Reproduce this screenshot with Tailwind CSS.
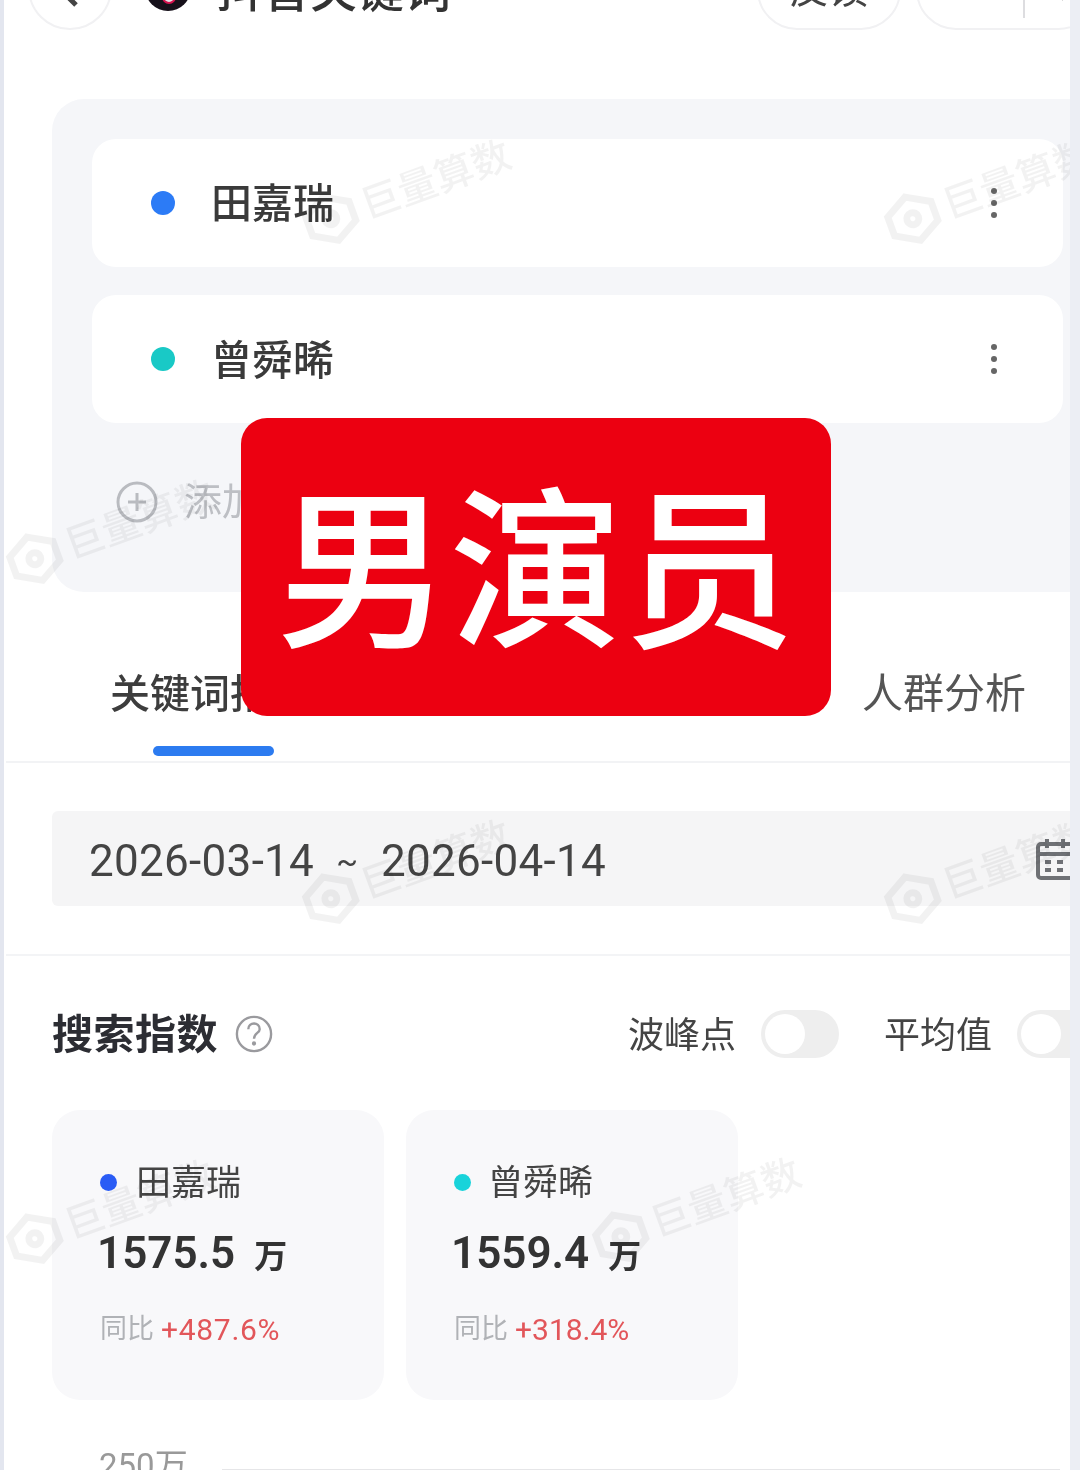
<!DOCTYPE html>
<html lang="zh">
<head>
<meta charset="utf-8">
<script src="https://cdn.jsdelivr.net/npm/@tailwindcss/browser@4"></script>
</head>
<body class="m-0 bg-white">
<div class="relative flex w-[1080px] h-[1470px] overflow-hidden bg-[#eceef4] text-[#333] font-['Roboto','Noto_Sans_CJK_SC',sans-serif]">
  <div class="w-[4px] shrink-0 bg-[#e3e6ef]"></div>
  <main class="relative w-[1066px] shrink-0 h-[1470px] overflow-hidden bg-white blur-[0.6px]">
    <!-- header -->
    <header class="flex items-center h-[84px] -mt-[54px] pl-[24px]">
      <div class="flex items-center justify-center w-[84px] h-[84px] rounded-full border-2 border-[#f1f1f3]">
        <svg class="mt-[6px]" width="28" height="36" viewBox="0 0 28 36" fill="none" stroke="#444" stroke-width="5"><path d="M20 4 6 18l14 14"/></svg>
      </div>
      <svg class="ml-[33px]" width="46" height="46" viewBox="0 0 46 46"><circle cx="23" cy="23" r="23" fill="#16101a"/><circle cx="24" cy="32" r="6" fill="#e8e3e8" stroke="#d3124f" stroke-width="2"/></svg>
      <span class="ml-[25px] pt-[4px] text-[47px] leading-none text-[#333] font-medium whitespace-nowrap">抖音关键词</span>
      <div class="ml-auto flex items-center justify-center w-[144px] h-[84px] pt-[4px] rounded-[40px] border-2 border-[#f1f1f3] text-[40px] text-[#444] shrink-0">反馈</div>
      <div class="ml-[15px] flex items-center w-[182px] -mr-[28px] h-[84px] rounded-[40px] border-2 border-[#f1f1f3] shrink-0">
        <span class="ml-[105px] w-[2px] h-[46px] mt-[14px] bg-[#dddde0]"></span>
        <svg class="ml-[34px] mt-[-6px]" width="16" height="32" viewBox="0 0 16 32" fill="none" stroke="#444" stroke-width="4"><path d="M2 30 14 18"/></svg>
      </div>
    </header>

    <!-- compare card -->
    <section class="mt-[69px] ml-[48px] w-[1100px] h-[493px] rounded-[32px] bg-[#f5f6f9] pt-[40px] pl-[40px]">
      <div class="flex flex-col gap-[28px] w-[971px]">
        <div class="flex items-center h-[128px] rounded-[24px] bg-white pl-[59px] pr-[66px]">
          <span class="w-[24px] h-[24px] rounded-full bg-[#2c7bf6]"></span>
          <span class="ml-[36px] pt-[4px] text-[41px] font-medium text-[#3a3a3a]">田嘉瑞</span>
          <span class="ml-auto flex flex-col gap-[6px]"><i class="block w-[6px] h-[6px] rounded-full bg-[#666]"></i><i class="block w-[6px] h-[6px] rounded-full bg-[#666]"></i><i class="block w-[6px] h-[6px] rounded-full bg-[#666]"></i></span>
        </div>
        <div class="flex items-center h-[128px] rounded-[24px] bg-white pl-[59px] pr-[66px]">
          <span class="w-[24px] h-[24px] rounded-full bg-[#19c9c6]"></span>
          <span class="ml-[36px] pt-[5px] text-[41px] font-medium text-[#3a3a3a]">曾舜晞</span>
          <span class="ml-auto flex flex-col gap-[6px]"><i class="block w-[6px] h-[6px] rounded-full bg-[#666]"></i><i class="block w-[6px] h-[6px] rounded-full bg-[#666]"></i><i class="block w-[6px] h-[6px] rounded-full bg-[#666]"></i></span>
        </div>
      </div>
      <div class="flex items-center h-[42px] mt-[58px] ml-[24px]">
        <svg width="42" height="42" viewBox="0 0 42 42" fill="none" stroke="#b9bbc0" stroke-width="3"><circle cx="21" cy="21" r="19"/><path d="M21 12v18M12 21h18"/></svg>
        <span class="ml-[26px] text-[38px] text-[#bdbfc4]">添加对比词</span>
      </div>
    </section>

    <!-- tabs -->
    <nav class="relative flex items-center h-[171px] pt-[36px] ml-[2px] border-b-2 border-[#f2f3f5] box-border">
      <span class="ml-[104px] text-[40px] font-medium text-[#3d3d3d]">关键词指数</span>
      <span class="ml-auto mr-[44px] text-[41px] text-[#555]">人群分析</span>
      <span class="absolute left-[147px] bottom-[5px] w-[121px] h-[10px] rounded-full bg-[#2c7bf0]"></span>
    </nav>

    <!-- date -->
    <div class="flex items-center mt-[48px] ml-[48px] w-[1100px] h-[95px] rounded-[6px] bg-[#f5f5f6] pl-[37px]">
      <span class="pt-[4px] text-[44px] tracking-[0.3px] text-[#444] whitespace-nowrap">2026-03-14</span>
      <span class="ml-[22px] pt-[4px] text-[32px] text-[#444]">~</span>
      <span class="ml-[23px] pt-[4px] text-[44px] tracking-[0.3px] text-[#444] whitespace-nowrap">2026-04-14</span>
      <svg class="ml-[430px] shrink-0" width="36" height="42" viewBox="0 0 36 42" fill="none" stroke="#6f7175" stroke-width="4"><rect x="2" y="6" width="38" height="34" rx="3"/><path d="M2 16h38M11 1v9M27 1v9M9 24h6M21 24h6M9 32h6M21 32h6"/></svg>
    </div>
    <div class="mt-[48px] ml-[2px] h-[2px] bg-[#f3f4f6]"></div>

    <!-- search index heading -->
    <div class="flex items-center h-[48px] mt-[54px] ml-[48px]">
      <h2 class="pt-[4px] text-[41px] tracking-[0.5px] font-bold text-[#2c2d33] whitespace-nowrap">搜索指数</h2>
      <svg class="ml-[17px] shrink-0" width="38" height="38" viewBox="0 0 40 40" fill="none" stroke="#9a9a9e" stroke-width="2.5"><circle cx="20" cy="20" r="18"/><path d="M14 15c0-4 3-6 6-6s6 2 6 6c0 4-6 4-6 10"/><circle cx="20" cy="30" r="1" fill="#9a9a9e"/></svg>
      <span class="ml-[355px] pt-[4px] text-[36px] text-[#444] whitespace-nowrap">波峰点</span>
      <span class="ml-[25px] flex items-center w-[78px] h-[48px] rounded-full bg-[#eeeeee] pl-[4px] shrink-0"><i class="block w-[40px] h-[40px] rounded-full bg-white"></i></span>
      <span class="ml-[45px] pt-[4px] text-[36px] text-[#444] whitespace-nowrap">平均值</span>
      <span class="ml-[25px] flex items-center w-[78px] h-[48px] rounded-full bg-[#eeeeee] pl-[4px] shrink-0"><i class="block w-[40px] h-[40px] rounded-full bg-white"></i></span>
    </div>

    <!-- metric cards -->
    <div class="flex gap-[22px] mt-[52px] ml-[48px]">
      <article class="w-[332px] h-[290px] rounded-[28px] bg-[#f8f8fa] pt-[48px] pl-[48px]">
        <div class="flex items-center h-[48px]"><span class="w-[17px] h-[17px] rounded-full bg-[#2a5cf5]"></span><span class="ml-[19px] pt-[4px] text-[35px] text-[#444]">田嘉瑞</span></div>
        <div class="flex items-baseline h-[60px] leading-[60px] mt-[17px] -ml-[3px] text-[#333]"><span class="text-[44px] font-semibold">1575.5</span><span class="ml-[19px] text-[33px] font-bold">万</span></div>
        <div class="flex items-center h-[36px] mt-[28px] text-[30px]"><span class="text-[#b0b2b6] text-[27px]">同比</span><span class="ml-[7px] tracking-[0.7px] text-[#e2565a]">+487.6%</span></div>
      </article>
      <article class="w-[332px] h-[290px] rounded-[28px] bg-[#f8f8fa] pt-[48px] pl-[48px]">
        <div class="flex items-center h-[48px]"><span class="w-[17px] h-[17px] rounded-full bg-[#19d3da]"></span><span class="ml-[17px] pt-[4px] text-[35px] text-[#444]">曾舜晞</span></div>
        <div class="flex items-baseline h-[60px] leading-[60px] mt-[17px] -ml-[3px] text-[#333]"><span class="text-[44px] font-semibold">1559.4</span><span class="ml-[19px] text-[33px] font-bold">万</span></div>
        <div class="flex items-center h-[36px] mt-[28px] text-[30px]"><span class="text-[#b0b2b6] text-[27px]">同比</span><span class="ml-[7px] text-[#e2565a]">+318.4%</span></div>
      </article>
    </div>

    <!-- chart head -->
    <div class="flex items-start mt-[50px] ml-[95px] h-[30px]">
      <span class="text-[33px] leading-[32px] text-[#999] whitespace-nowrap">250万</span>
      <span class="ml-[34px] mt-[19px] w-[838px] h-[2px] bg-[#e6e6e8]"></span>
    </div>

    <!-- watermarks -->
    <div class="absolute left-[294px] top-[162px] flex items-center gap-[6px] -rotate-[20deg] text-[39px] font-medium text-black/[0.05] whitespace-nowrap"><svg width="56" height="56" viewBox="0 0 56 56" fill="none" stroke="#000" stroke-opacity=".05" stroke-width="7"><path d="M28 5 51 18v20L28 51 5 38V18z"/><circle cx="28" cy="28" r="6"/></svg>巨量算数</div>
    <div class="absolute left-[876px] top-[162px] flex items-center gap-[6px] -rotate-[20deg] text-[39px] font-medium text-black/[0.05] whitespace-nowrap"><svg width="56" height="56" viewBox="0 0 56 56" fill="none" stroke="#000" stroke-opacity=".05" stroke-width="7"><path d="M28 5 51 18v20L28 51 5 38V18z"/><circle cx="28" cy="28" r="6"/></svg>巨量算数</div>
    <div class="absolute left-[-2px] top-[502px] flex items-center gap-[6px] -rotate-[20deg] text-[39px] font-medium text-black/[0.05] whitespace-nowrap"><svg width="56" height="56" viewBox="0 0 56 56" fill="none" stroke="#000" stroke-opacity=".05" stroke-width="7"><path d="M28 5 51 18v20L28 51 5 38V18z"/><circle cx="28" cy="28" r="6"/></svg>巨量算数</div>
    <div class="absolute left-[294px] top-[842px] flex items-center gap-[6px] -rotate-[20deg] text-[39px] font-medium text-black/[0.05] whitespace-nowrap"><svg width="56" height="56" viewBox="0 0 56 56" fill="none" stroke="#000" stroke-opacity=".05" stroke-width="7"><path d="M28 5 51 18v20L28 51 5 38V18z"/><circle cx="28" cy="28" r="6"/></svg>巨量算数</div>
    <div class="absolute left-[876px] top-[842px] flex items-center gap-[6px] -rotate-[20deg] text-[39px] font-medium text-black/[0.05] whitespace-nowrap"><svg width="56" height="56" viewBox="0 0 56 56" fill="none" stroke="#000" stroke-opacity=".05" stroke-width="7"><path d="M28 5 51 18v20L28 51 5 38V18z"/><circle cx="28" cy="28" r="6"/></svg>巨量算数</div>
    <div class="absolute left-[-2px] top-[1182px] flex items-center gap-[6px] -rotate-[20deg] text-[39px] font-medium text-black/[0.05] whitespace-nowrap"><svg width="56" height="56" viewBox="0 0 56 56" fill="none" stroke="#000" stroke-opacity=".05" stroke-width="7"><path d="M28 5 51 18v20L28 51 5 38V18z"/><circle cx="28" cy="28" r="6"/></svg>巨量算数</div>
    <div class="absolute left-[584px] top-[1180px] flex items-center gap-[6px] -rotate-[20deg] text-[39px] font-medium text-black/[0.05] whitespace-nowrap"><svg width="56" height="56" viewBox="0 0 56 56" fill="none" stroke="#000" stroke-opacity=".05" stroke-width="7"><path d="M28 5 51 18v20L28 51 5 38V18z"/><circle cx="28" cy="28" r="6"/></svg>巨量算数</div>
  </main>
  <div class="w-[10px] shrink-0 bg-[#eceef4]"></div>

  <!-- red banner over the page -->
  <div class="absolute left-[241px] top-[418px] flex items-center justify-center w-[590px] h-[298px] pb-[18px] rounded-[26px] bg-[#ec0011]">
    <span class="text-[173px] leading-none font-medium text-white whitespace-nowrap font-['Noto_Sans_CJK_SC',sans-serif]">男演员</span>
  </div>
</div>
</body>
</html>
